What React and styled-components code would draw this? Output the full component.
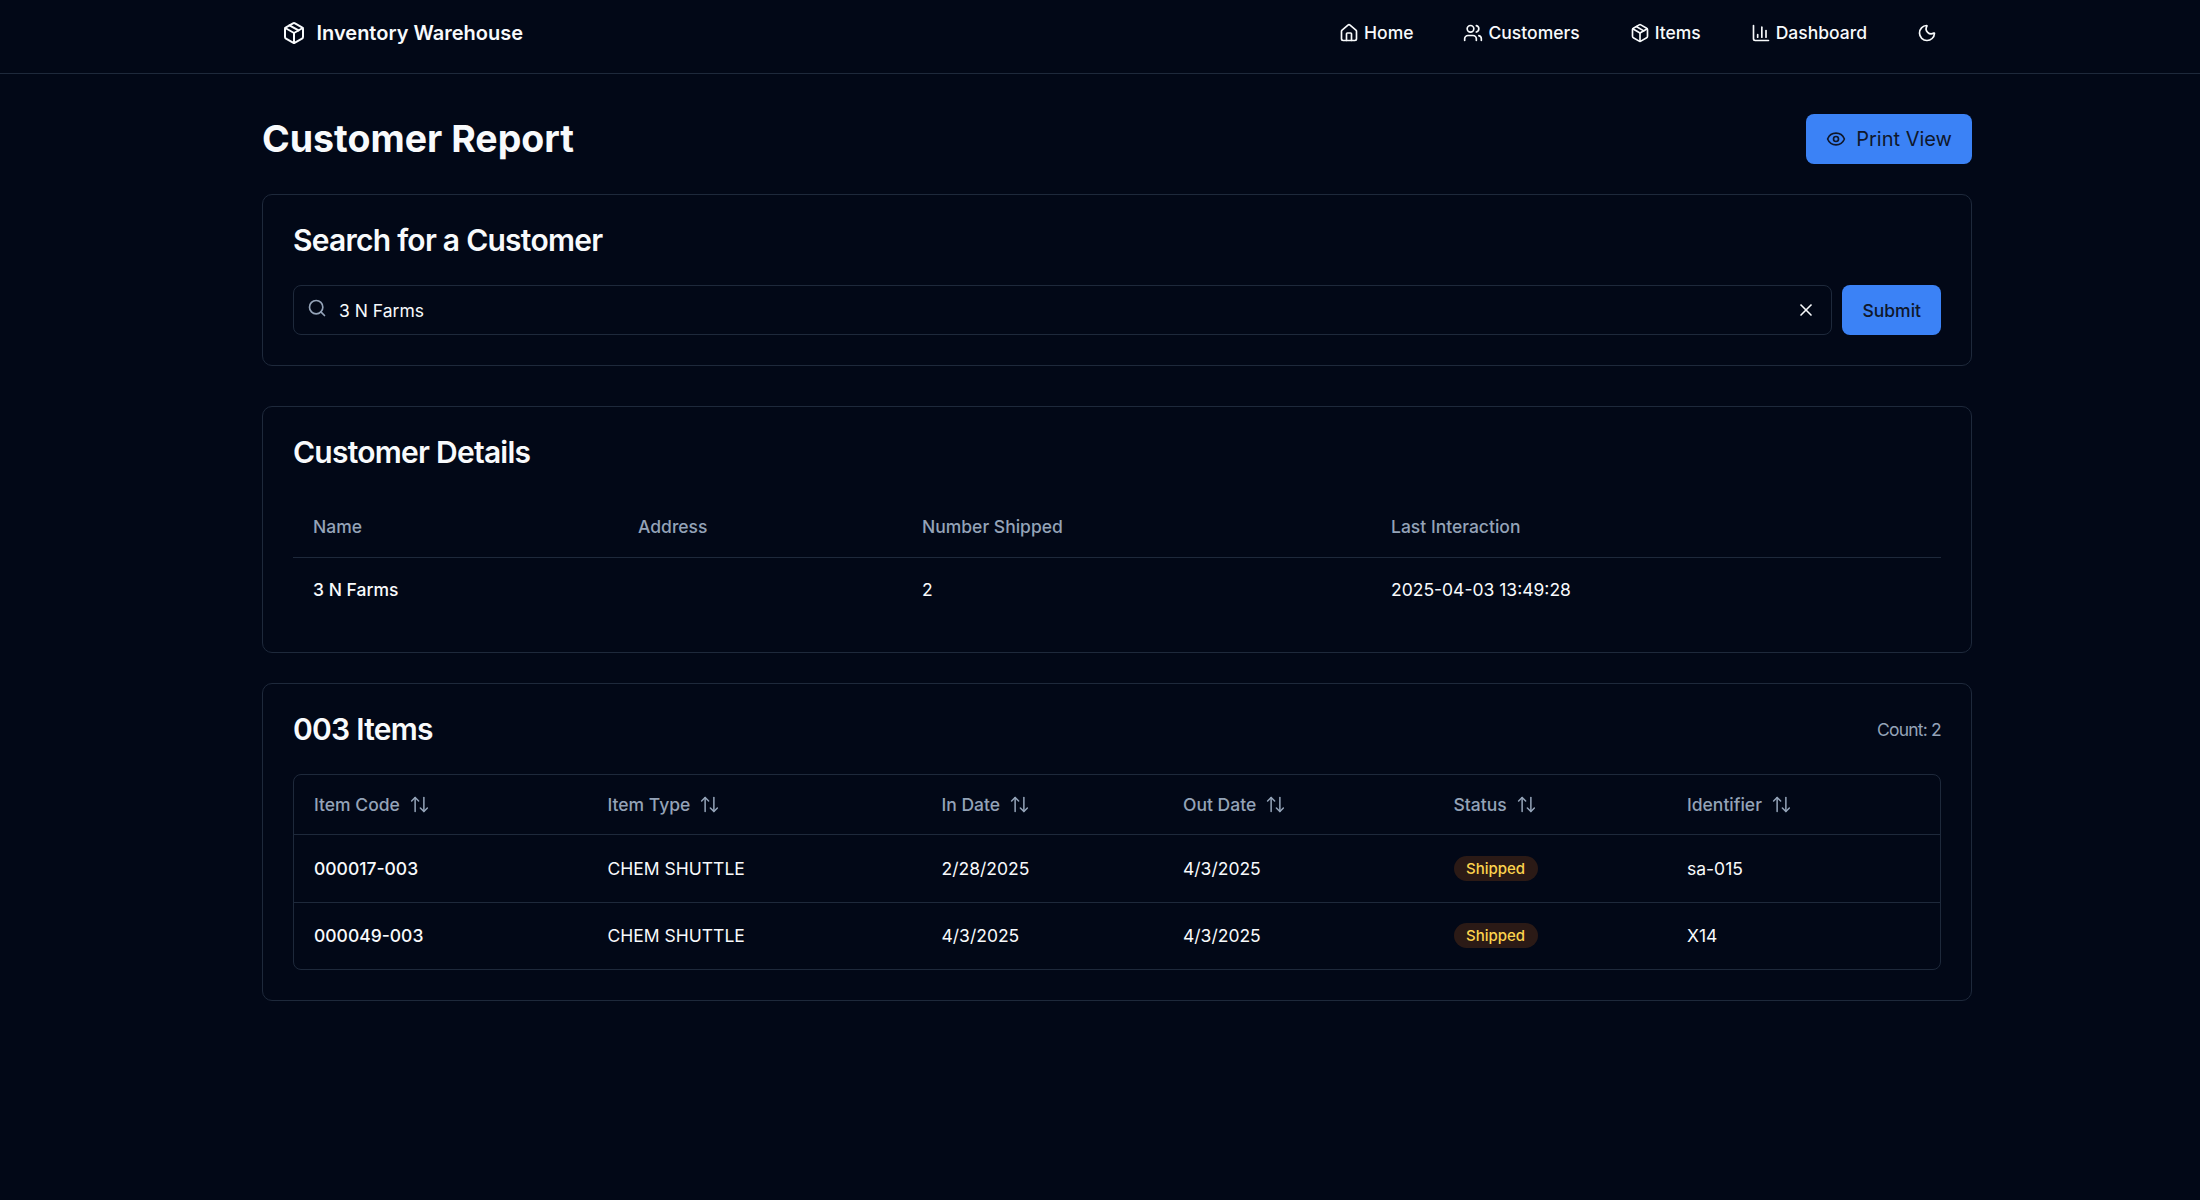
import React from "react";
import styled, { createGlobalStyle } from "styled-components";
import { Package, House, Users, ChartColumn, Moon, Eye, Search, X, ArrowUpDown } from "lucide-react";

const Global = createGlobalStyle`
  * { box-sizing: border-box; }
  html, body { margin: 0; padding: 0; background: #020817; }
  body { font-family: Inter, "Liberation Sans", sans-serif; color: #f8fafc; min-height: 1200px; }
`;

const Nav = styled.header`
  height: 74px;
  border-bottom: 1px solid #1e293b;
  display: flex;
  align-items: center;
  justify-content: space-between;
  padding: 0 263px 8px 282px;
`;
const Brand = styled.div`
  display: flex;
  align-items: center;
  gap: 10.5px;
  font-size: 20px;
  font-weight: 600;
`;
const NavLinks = styled.nav`
  display: flex;
  align-items: center;
  gap: 50px;
`;
const NavLink = styled.a`
  display: flex;
  align-items: center;
  gap: 5px;
  font-size: 17.5px;
  font-weight: 500;
  color: #f8fafc;
`;
const Main = styled.main`
  width: 1710px;
  margin-left: 262px;
  padding-top: 40px;
`;
const TitleRow = styled.div`
  display: flex;
  align-items: center;
  justify-content: space-between;
  height: 50px;
  margin-bottom: 30px;
`;
const Title = styled.h1`
  margin: 0;
  font-size: 37.5px;
  font-weight: 700;
  line-height: 50px;
`;
const PrimaryButton = styled.button`
  display: flex;
  align-items: center;
  justify-content: center;
  gap: 10px;
  height: 50px;
  border: 0;
  border-radius: 8px;
  background: #3b82f6;
  color: #0f172a;
  font-family: inherit;
  font-size: ${p => (p.$large ? "20px" : "17.5px")};
  font-weight: ${p => (p.$large ? 400 : 500)};
  padding: 0 20px;
`;
const Card = styled.section`
  border: 1px solid #1e293b;
  border-radius: 10px;
  padding: 30px;
  margin-bottom: ${p => p.$gap}px;
`;
const CardHead = styled.div`
  display: flex;
  align-items: center;
  justify-content: space-between;
  height: 30px;
  margin-bottom: 30px;
`;
const CardTitle = styled.h2`
  margin: 0;
  font-size: 30px;
  font-weight: 600;
  line-height: 30px;
  letter-spacing: -0.025em;
`;
const Count = styled.span`
  font-size: 17.5px;
  letter-spacing: -0.045em;
  color: #94a3b8;
`;
const SearchRow = styled.div`
  display: flex;
  gap: 10px;
`;
const SearchBox = styled.div`
  flex: 1;
  height: 50px;
  border: 1px solid #1e293b;
  border-radius: 8px;
  display: flex;
  align-items: center;
  padding: 0 15px 0 12.5px;
  gap: 12.5px;
  font-size: 17.5px;
  color: #f8fafc;
`;
const SearchText = styled.span`
  flex: 1;
`;
const SearchGlyph = styled(Search)`
  color: #94a3b8;
  position: relative;
  top: -2px;
`;
const Table = styled.table`
  width: 100%;
  border-collapse: collapse;
  table-layout: fixed;
  font-size: 17.5px;
`;
const Th = styled.th`
  height: ${p => p.$h}px;
  padding: 0 20px;
  text-align: left;
  font-weight: 500;
  color: #94a3b8;
  border-bottom: 1px solid #1e293b;
`;
const Td = styled.td`
  height: ${p => p.$h}px;
  padding: 0 20px;
  font-weight: ${p => (p.$strong ? 500 : 400)};
  border-bottom: ${p => (p.$line ? "1px solid #1e293b" : "0")};
`;
const SortHead = styled.span`
  display: inline-flex;
  align-items: center;
  gap: 9px;
`;
const TableFrame = styled.div`
  border: 1px solid #1e293b;
  border-radius: 8px;
  overflow: hidden;
`;
const Badge = styled.span`
  display: inline-flex;
  align-items: center;
  height: 25px;
  padding: 0 12.5px;
  border-radius: 999px;
  background: #2b1a16;
  color: #fcd34d;
  font-size: 15px;
  font-weight: 500;
`;

const detailCols = [325, 284, 469, 570];
const itemCols = [293.5, 334, 241.5, 270.5, 233.5, 273];
const itemHeads = ["Item Code", "Item Type", "In Date", "Out Date", "Status", "Identifier"];
const rows = [
  ["000017-003", "CHEM SHUTTLE", "2/28/2025", "4/3/2025", "sa-015"],
  ["000049-003", "CHEM SHUTTLE", "4/3/2025", "4/3/2025", "X14"],
];

export default function App() {
  return (
    <>
      <Global />
      <Nav>
        <Brand><Package size={24} strokeWidth={2} />Inventory Warehouse</Brand>
        <NavLinks>
          <NavLink><House size={20} />Home</NavLink>
          <NavLink><Users size={20} />Customers</NavLink>
          <NavLink><Package size={20} />Items</NavLink>
          <NavLink><ChartColumn size={20} />Dashboard</NavLink>
          <NavLink><Moon size={20} /></NavLink>
        </NavLinks>
      </Nav>
      <Main>
        <TitleRow>
          <Title>Customer Report</Title>
          <PrimaryButton $large><Eye size={20} />Print View</PrimaryButton>
        </TitleRow>
        <Card $gap={40}>
          <CardHead><CardTitle>Search for a Customer</CardTitle></CardHead>
          <SearchRow>
            <SearchBox>
              <SearchGlyph size={20} />
              <SearchText>3 N Farms</SearchText>
              <X size={20} />
            </SearchBox>
            <PrimaryButton>Submit</PrimaryButton>
          </SearchRow>
        </Card>
        <Card $gap={30}>
          <CardHead><CardTitle>Customer Details</CardTitle></CardHead>
          <Table>
            <colgroup>{detailCols.map((w, i) => <col key={i} width={w} />)}</colgroup>
            <thead>
              <tr>
                <Th $h={60}>Name</Th><Th $h={60}>Address</Th><Th $h={60}>Number Shipped</Th><Th $h={60}>Last Interaction</Th>
              </tr>
            </thead>
            <tbody>
              <tr>
                <Td $h={65} $strong>3 N Farms</Td><Td $h={65} /><Td $h={65}>2</Td><Td $h={65}>2025-04-03 13:49:28</Td>
              </tr>
            </tbody>
          </Table>
        </Card>
        <Card $gap={0}>
          <CardHead><CardTitle>003 Items</CardTitle><Count>Count: 2</Count></CardHead>
          <TableFrame>
            <Table>
              <colgroup>{itemCols.map((w, i) => <col key={i} width={w} />)}</colgroup>
              <thead>
                <tr>
                  {itemHeads.map(h => (
                    <Th $h={59} key={h}><SortHead>{h}<ArrowUpDown size={21} strokeWidth={1.75} /></SortHead></Th>
                  ))}
                </tr>
              </thead>
              <tbody>
                {rows.map((r, i) => (
                  <tr key={r[0]}>
                    <Td $h={i === 0 ? 68 : 67} $line={i === 0} $strong>{r[0]}</Td>
                    <Td $line={i === 0}>{r[1]}</Td>
                    <Td $line={i === 0}>{r[2]}</Td>
                    <Td $line={i === 0}>{r[3]}</Td>
                    <Td $line={i === 0}><Badge>Shipped</Badge></Td>
                    <Td $line={i === 0}>{r[4]}</Td>
                  </tr>
                ))}
              </tbody>
            </Table>
          </TableFrame>
        </Card>
      </Main>
    </>
  );
}
